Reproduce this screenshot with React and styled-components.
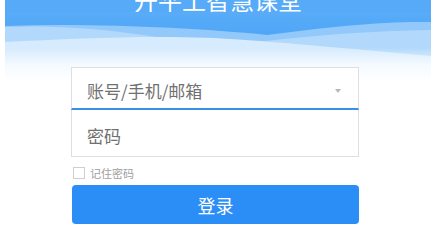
import React from 'react';
import styled, { createGlobalStyle } from 'styled-components';

const GlobalStyle = createGlobalStyle`
  html, body {
    margin: 0;
    padding: 0;
    background: #ffffff;
    overflow: hidden;
  }
  body {
    font-family: "Noto Sans CJK SC", "Noto Sans", sans-serif;
  }
`;

const Page = styled.div`
  width: 438px;
  height: 229px;
  overflow: hidden;
`;

const Banner = styled.div`
  width: 426px;
  margin-left: 5px;
  background: #56aaf7;
`;

const Title = styled.h1`
  margin: -12px 0 0 0;
  height: 24px;
  font-size: 24px;
  line-height: 24px;
  font-weight: 400;
  color: #ffffff;
  text-align: center;
`;

const Wave = styled.svg`
  display: block;
  width: 426px;
  height: 70px;
`;

const Form = styled.div`
  position: relative;
  width: 288px;
  margin: -15px 0 0 71px;
`;

const Field = styled.div`
  box-sizing: border-box;
  display: flex;
  align-items: center;
  height: ${(p) => p.$height}px;
  padding: ${(p) => p.$top}px 14px 0 15px;
  background: #ffffff;
  border: 1px solid #dcdfe3;
  border-top: ${(p) => (p.$first ? '1px solid #dcdfe3' : 'none')};
  border-bottom: ${(p) => (p.$active ? '2px solid #3b8fe6' : '1px solid #dcdfe3')};
  color: #707070;
  font-size: 17px;
`;

const Placeholder = styled.span`
  flex: 1;
`;

const Caret = styled.span`
  width: 0;
  height: 0;
  margin-right: 3px;
  border-left: 3px solid transparent;
  border-right: 3px solid transparent;
  border-top: 4px solid #b8b8b8;
`;

const Remember = styled.label`
  display: flex;
  align-items: center;
  gap: 5px;
  margin: 10px 0 0 2px;
  font-size: 11px;
  color: #a0a0a0;
  height: 12px;
`;

const Box = styled.span`
  box-sizing: border-box;
  width: 12px;
  height: 12px;
  border: 1px solid #cfcfcf;
  background: #fff;
`;

const Button = styled.button`
  display: block;
  width: 287px;
  height: 39px;
  margin: 6px 0 0 1px;
  border: none;
  border-radius: 4px;
  background: #2b8ef6;
  color: #ffffff;
  font-family: "Noto Sans CJK SC", "Noto Sans", sans-serif;
  font-size: 18px;
  cursor: pointer;
`;

export default function App() {
  return (
    <Page>
      <GlobalStyle />
      <Banner>
        <Title>开平工智慧课堂</Title>
        <Wave viewBox="0 0 426 70" preserveAspectRatio="none">
          <defs>
            <linearGradient id="sky" x1="0" y1="0" x2="0" y2="1">
              <stop offset="0" stopColor="#58acf8" />
              <stop offset="0.4" stopColor="#4ea5f6" />
            </linearGradient>
            <linearGradient id="fade" x1="0" y1="0" x2="0" y2="1">
              <stop offset="0" stopColor="#ffffff" stopOpacity="0" />
              <stop offset="0.5" stopColor="#ffffff" stopOpacity="0.75" />
              <stop offset="1" stopColor="#ffffff" stopOpacity="1" />
            </linearGradient>
          </defs>
          <rect x="0" y="0" width="426" height="70" fill="url(#sky)" />
          <path d="M0,14 C90,11 190,16 262,23 C320,15 380,9 426,10 L426,70 L0,70 Z" fill="#92c9fa" />
          <path d="M0,15 C70,12 150,22 205,36 C270,27 350,19 426,18 L426,70 L0,70 Z" fill="#b2d9fc" />
          <path d="M0,30 C80,26 170,22 240,28 C320,34 380,40 426,44 L426,70 L0,70 Z" fill="#d6ebfe" />
          <rect x="0" y="36" width="426" height="34" fill="url(#fade)" />
        </Wave>
      </Banner>
      <Form>
        <Field $first $active $height={43} $top={5}>
          <Placeholder>账号/手机/邮箱</Placeholder>
          <Caret />
        </Field>
        <Field $height={47} $top={5}>
          <Placeholder>密码</Placeholder>
        </Field>
        <Remember>
          <Box />
          记住密码
        </Remember>
        <Button>登录</Button>
      </Form>
    </Page>
  );
}
